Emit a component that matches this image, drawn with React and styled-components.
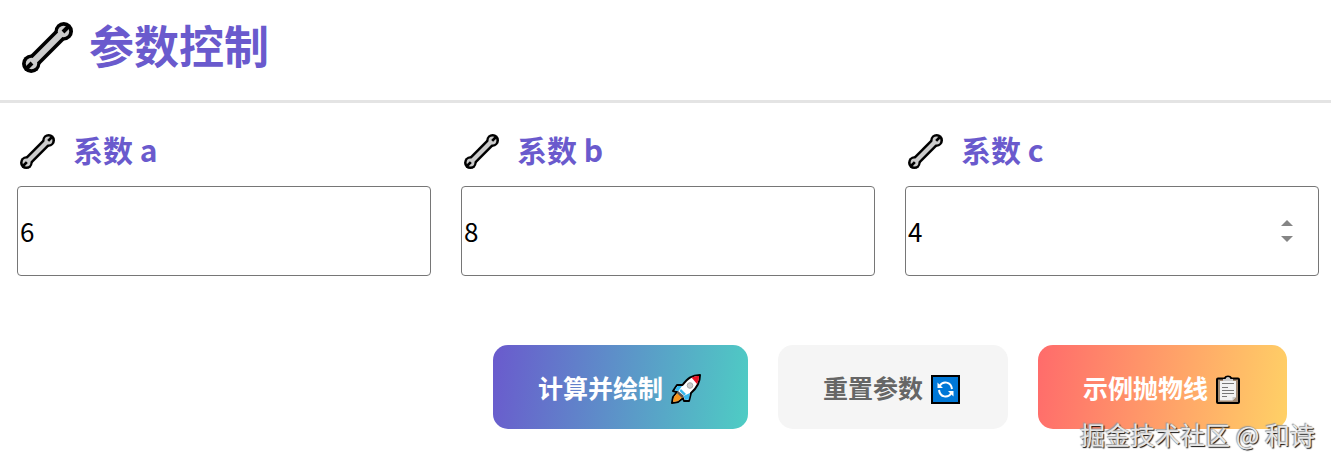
import React, { useRef } from "react";
import styled, { createGlobalStyle, css } from "styled-components";

const GlobalStyle = createGlobalStyle`
  * { box-sizing: border-box; }
  body {
    margin: 0;
    background: #fff;
    font-family: "Noto Sans CJK SC", "Noto Sans", sans-serif;
  }
`;

const Page = styled.main`
  position: relative;
  padding-bottom: 36px;
`;

const Header = styled.header`
  display: flex;
  align-items: center;
  gap: 16px;
  height: 103px;
  padding: 0 22px 6px;
  border-bottom: 3px solid #e4e4e4;
`;

const Title = styled.h1`
  margin: 0;
  padding-bottom: 4px;
  color: #6a5acd;
  font-size: 45px;
  line-height: 60px;
  font-weight: 700;
`;

const Fields = styled.div`
  display: grid;
  grid-template-columns: repeat(3, minmax(0, 1fr));
  gap: 30px;
  padding: 28px 12px 0 17px;
`;

const Label = styled.label`
  display: flex;
  align-items: center;
  gap: 18px;
  height: 40px;
  margin-bottom: 15px;
  padding-left: 3px;
  color: #6a5acd;
  font-size: 30px;
  line-height: 40px;
  font-weight: 700;
`;

const LabelText = styled.span`
  padding-bottom: 4px;
`;

const InputWrap = styled.div`
  position: relative;
`;

const NumberInput = styled.input`
  display: block;
  width: 100%;
  height: 90px;
  padding: 0 2px 2px;
  border: 1px solid #767676;
  border-radius: 4px;
  background: #fff;
  color: #000;
  font-family: inherit;
  font-size: 26px;
  appearance: textfield;

  &::-webkit-inner-spin-button {
    appearance: none;
    margin: 0;
  }
`;

const Spinner = styled.div`
  position: absolute;
  top: 0;
  right: 25px;
  height: 100%;
  display: flex;
  flex-direction: column;
  justify-content: center;
  gap: 2px;
`;

const StepButton = styled.button`
  display: flex;
  align-items: center;
  justify-content: center;
  width: 14px;
  height: 14px;
  padding: 0;
  border: 0;
  background: none;
`;

const Actions = styled.div`
  display: flex;
  justify-content: flex-end;
  gap: 30px;
  padding: 69px 44px 0;
`;

const tones = {
  primary: css`
    background: linear-gradient(98deg, #6a5acd, #4ecdc4);
    color: #fff;
  `,
  neutral: css`
    background: #f5f5f5;
    color: #666;
  `,
  warm: css`
    background: linear-gradient(98deg, #ff6b6b, #ffd166);
    color: #fff;
  `,
};

const Icon = styled.svg`
  display: block;
  flex: none;
`;

const ActionButton = styled.button`
  display: flex;
  align-items: center;
  gap: 8px;
  height: 84px;
  padding: 0 47px 0 45px;
  border: 0;
  border-radius: 15px;
  font-family: inherit;
  font-size: 25px;
  line-height: 36px;
  font-weight: 700;
  ${({ $tone }) => tones[$tone]}

  ${Icon} {
    margin-top: 4px;
  }
`;

const Watermark = styled.div`
  position: absolute;
  right: 16px;
  bottom: 12px;
  color: #e6e6e6;
  font-size: 25px;
  line-height: 38px;
  text-shadow: -1px -1px 1px #999, 1px 1px 1px #111;
  pointer-events: none;
`;

function Wrench({ size }) {
  return (
    <Icon width={size} height={size} viewBox="0 0 51 51" aria-hidden="true">
      <path d="M9.500 41.500 41.500 9.500" stroke="#000" strokeWidth="13.500" />
      <circle cx="41.800" cy="9.200" r="9.200" />
      <circle cx="9.200" cy="41.800" r="9.200" />
      <path d="M33 10 31 15 36 20 41 18Z M18 41 20 36 15 31 10 33Z" />
      <path d="M11 40 40 11" stroke="#ccc" strokeWidth="6.200" />
      <circle cx="41.500" cy="9.500" r="5.700" fill="#ccc" />
      <circle cx="9.500" cy="41.500" r="5.700" fill="#ccc" />
      <path d="M41 10 47 4 M10 41 4 47" stroke="#000" strokeWidth="4" />
    </Icon>
  );
}

function Rocket() {
  return (
    <Icon width="30" height="30" viewBox="0 0 30 30" aria-hidden="true">
      <path
        d="M29 1C21 1 17 4 11.500 11L6 11 2 17 6 18 2 23 1 29 7 28 12 24 13 27 18 27 20 19C27 13 29 8 29 1Z"
        fill="#fff" stroke="#000" strokeWidth="2" strokeLinejoin="round"
      />
      <path d="M11 12H6.500L3.500 16.500 7.500 17Z M19 19 18 25.500 14 26 12.500 22Z" fill="#35b7ed" />
      <path d="M20.500 3.500C24 2 26 2 28 2 28 5 27 8 26 10Z" fill="#e81224" />
      <path d="M7 18 12 23 7 27 2 28 3 23Z" fill="#f7941d" />
      <path d="M7 17 13 22 11 24 6 19Z" fill="#555" />
      <path d="M10 15 8.500 17 13 21.500 15 20Z" fill="#35b7ed" />
      <circle cx="19" cy="11.500" r="2.800" fill="#ccc" stroke="#aaa" />
    </Icon>
  );
}

function Refresh() {
  return (
    <Icon width="30" height="29" viewBox="0 0 30 29" aria-hidden="true">
      <rect x="1" y="1" width="27" height="27" fill="#0078d7" stroke="#000" strokeWidth="2" />
      <path d="M8.500 11C12 5.500 20 6.500 21 14 M20.500 18C17 23.500 9 22.500 8 15" fill="none" stroke="#fff" strokeWidth="2" />
      <path d="M6.500 7.500V13H12Z M22.500 21.500V16H17Z" fill="#fff" />
    </Icon>
  );
}

function Clipboard() {
  return (
    <Icon width="24" height="29" viewBox="0 0 24 29" aria-hidden="true">
      <path d="M2 2.500H8Q9 .5 12 .5T16 2.500H22Q24 2.500 24 4.500V27Q24 29 22 29H2Q0 29 0 27V4.500Q0 2.500 2 2.500Z" />
      <path d="M2 4.500H22V27H2Z" fill="#a18972" />
      <path d="M4 6H20V22L16.500 25.500H4Z" fill="#f2f2f2" />
      <path d="M16.500 25.500V22H20Z" fill="#ccc" />
      <path d="M7 6V4H9.500Q10 2 12 2T14.500 4H17V6Z" fill="#ccc" />
      <path d="M6 8.500H18M6 12.500H12M6 15.500H18M6 18.500H18M6 21.500H11" stroke="#777" strokeWidth="1.200" />
    </Icon>
  );
}

function CoefficientField({ name, value, stepper }) {
  const input = useRef(null);
  const id = `coefficient-${name}`;
  return (
    <div>
      <Label htmlFor={id}>
        <Wrench size={35} />
        <LabelText>系数 {name}</LabelText>
      </Label>
      <InputWrap>
        <NumberInput ref={input} id={id} type="number" defaultValue={value} />
        {stepper && (
          <Spinner>
            <StepButton type="button" aria-label="增加" onClick={() => input.current.stepUp()}>
              <Icon width="12" height="6" viewBox="0 0 12 6">
                <path d="M0 6 6 0 12 6Z" fill="#858585" />
              </Icon>
            </StepButton>
            <StepButton type="button" aria-label="减少" onClick={() => input.current.stepDown()}>
              <Icon width="12" height="6" viewBox="0 0 12 6">
                <path d="M0 0 6 6 12 0Z" fill="#858585" />
              </Icon>
            </StepButton>
          </Spinner>
        )}
      </InputWrap>
    </div>
  );
}

export default function App() {
  return (
    <>
      <GlobalStyle />
      <Page>
        <Header>
          <Wrench size={51} />
          <Title>参数控制</Title>
        </Header>
        <Fields>
          <CoefficientField name="a" value={6} />
          <CoefficientField name="b" value={8} />
          <CoefficientField name="c" value={4} stepper />
        </Fields>
        <Actions>
          <ActionButton type="button" $tone="primary">
            计算并绘制
            <Rocket />
          </ActionButton>
          <ActionButton type="button" $tone="neutral">
            重置参数
            <Refresh />
          </ActionButton>
          <ActionButton type="button" $tone="warm">
            示例抛物线
            <Clipboard />
          </ActionButton>
        </Actions>
        <Watermark>掘金技术社区 @ 和诗</Watermark>
      </Page>
    </>
  );
}
